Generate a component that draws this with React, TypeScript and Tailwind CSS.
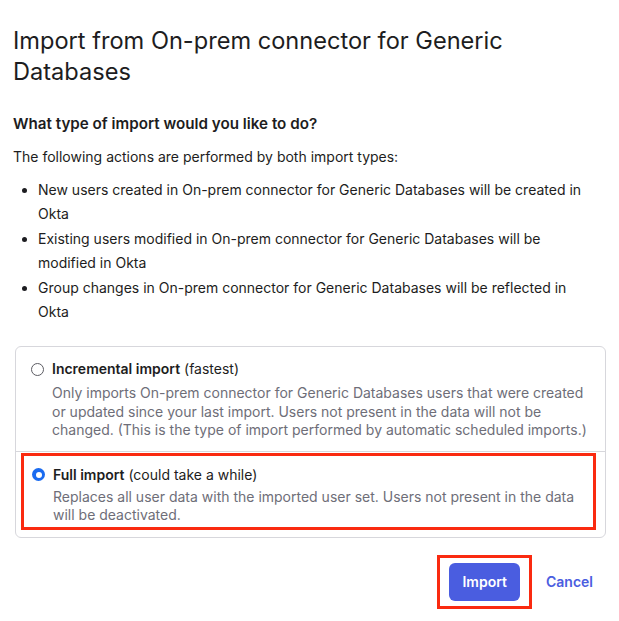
export default function App() {
  return (
    <div className="min-h-screen bg-white px-[13px] pt-[25px] text-[#1d1d21]" style={{ fontFamily: 'Inter, "Noto Sans", sans-serif' }}>
      <h1 className="text-[23.6px] leading-[31px] font-normal">Import from On-prem connector for Generic Databases</h1>

      <h2 className="mt-[25px] text-[15.2px] leading-[24px] font-semibold">What type of import would you like to do?</h2>
      <p className="mt-[10px] text-[14px] leading-[22px]">The following actions are performed by both import types:</p>

      <ul className="mt-[10px] list-disc pl-[25px] pr-[14px] text-[14px] leading-[24px]">
        <li>New users created in On-prem connector for Generic Databases will be created in Okta</li>
        <li className="mt-px">Existing users modified in On-prem connector for Generic Databases will be modified in Okta</li>
        <li className="mt-px">Group changes in On-prem connector for Generic Databases will be reflected in Okta</li>
      </ul>

      <div className="mt-[22px] ml-[2px] rounded-md border border-[#d7d7dc]">
        {/* incremental */}
        <div className="border-b border-[#d7d7dc] pt-[12px] pr-[14px] pb-[11px] pl-[15px]">
          <label className="flex items-center gap-[8px] text-[14px] leading-[20px]">
            <span className="h-[13px] w-[13px] shrink-0 rounded-full border border-[#5c5c63] bg-white" />
            <span>
              <span className="font-semibold">Incremental import</span> (fastest)
            </span>
          </label>
          <p className="mt-[5px] pl-[21px] text-[14px] leading-[18.5px] text-[#6e6e78]">
            Only imports On-prem connector for Generic Databases users that were created or updated since your last import. Users not present in the data will not be changed. (This is the type of import performed by automatic scheduled imports.)
          </p>
        </div>

        {/* full */}
        <div className="pr-[9px] pl-[5px] pt-px pb-[7px]">
          <div className="border-[3px] border-[#fa2a10] pt-[9px] pr-[12px] pb-[2px] pl-[8px]">
            <label className="flex items-center gap-[8px] text-[14px] leading-[20px]">
              <span className="flex h-[13px] w-[13px] shrink-0 items-center justify-center rounded-full bg-[#1a6bf0]">
                <span className="h-[6px] w-[6px] rounded-full bg-white" />
              </span>
              <span>
                <span className="font-semibold">Full import</span> (could take a while)
              </span>
            </label>
            <p className="mt-[3px] pl-[21px] text-[14px] leading-[18.5px] text-[#6e6e78]">
              Replaces all user data with the imported user set. Users not present in the data will be deactivated.
            </p>
          </div>
        </div>
      </div>

      <div className="mt-[17px] flex items-center justify-end gap-[14px] pr-[13px]">
        <div className="border-[3px] border-[#fa2a10] px-[9px] py-[5px]">
          <button className="h-[38px] rounded-md bg-[#4a5de0] px-[13px] text-[14px] font-semibold text-white">Import</button>
        </div>
        <button className="text-[14px] font-semibold text-[#4a5de0]">Cancel</button>
      </div>
    </div>
  );
}
